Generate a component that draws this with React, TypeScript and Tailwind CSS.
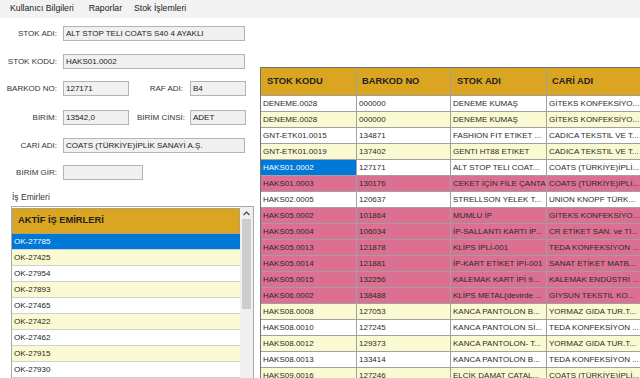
import React from "react";

type Tone = "w" | "y" | "p";

const rows: { kod: string; barkod: string; ad: string; cari: string; tone: Tone; sel?: boolean }[] = [
  { kod: "DENEME.0028", barkod: "000000", ad: "DENEME KUMAŞ", cari: "GİTEKS KONFEKSİYO...", tone: "w" },
  { kod: "DENEME.0028", barkod: "000000", ad: "DENEME KUMAŞ", cari: "GİTEKS KONFEKSİYO...", tone: "y" },
  { kod: "GNT-ETK01.0015", barkod: "134871", ad: "FASHION FIT ETIKET ...", cari: "CADICA TEKSTIL VE T...", tone: "w" },
  { kod: "GNT-ETK01.0019", barkod: "137402", ad: "GENTI HT88 ETIKET", cari: "CADICA TEKSTIL VE T...", tone: "y" },
  { kod: "HAKS01.0002", barkod: "127171", ad: "ALT STOP TELI COAT...", cari: "COATS (TÜRKİYE)İPLİ...", tone: "w", sel: true },
  { kod: "HAKS01.0003", barkod: "130176", ad: "CEKET İÇİN FİLE ÇANTA", cari: "COATS (TÜRKİYE)İPLİ...", tone: "p" },
  { kod: "HAKS02.0005", barkod: "120637", ad: "STRELLSON YELEK T...", cari: "UNION KNOPF TÜRK...", tone: "w" },
  { kod: "HAKS05.0002", barkod: "101864", ad: "MUMLU İP", cari: "GİTEKS KONFEKSİYO...", tone: "p" },
  { kod: "HAKS05.0004", barkod: "106034", ad: "İP-SALLANTI KARTI İP...", cari: "CR ETİKET SAN. ve Tİ...", tone: "p" },
  { kod: "HAKS05.0013", barkod: "121878", ad: "KLİPS İPLİ-001", cari: "TEDA KONFEKSİYON ...", tone: "p" },
  { kod: "HAKS05.0014", barkod: "121881", ad: "İP-KART ETİKET İPİ-001", cari: "SANAT ETİKET MATB...", tone: "p" },
  { kod: "HAKS05.0015", barkod: "132256", ad: "KALEMAK KART İPİ 9...", cari: "KALEMAK ENDÜSTRİ ...", tone: "p" },
  { kod: "HAKS06.0002", barkod: "138488", ad: "KLİPS METAL(devirde ...", cari: "GİYSUN TEKSTİL KO...", tone: "p" },
  { kod: "HAKS08.0008", barkod: "127053", ad: "KANCA PANTOLON B...", cari: "YORMAZ GIDA TUR.T...", tone: "y" },
  { kod: "HAKS08.0010", barkod: "127245", ad: "KANCA PANTOLON Sİ...", cari: "TEDA KONFEKSİYON ...", tone: "w" },
  { kod: "HAKS08.0012", barkod: "129373", ad: "KANCA PANTOLON- T...", cari: "YORMAZ GIDA TUR.T...", tone: "y" },
  { kod: "HAKS08.0013", barkod: "133414", ad: "KANCA PANTOLON B...", cari: "TEDA KONFEKSİYON ...", tone: "w" },
  { kod: "HAKS09.0016", barkod: "127246", ad: "ELCİK DAMAT CATAL...", cari: "COATS (TÜRKİYE)İPLİ...", tone: "y" },
];

const orders = ["OK-27785", "OK-27425", "OK-27954", "OK-27893", "OK-27465", "OK-27422", "OK-27462", "OK-27915", "OK-27930"];

const toneBg: Record<Tone, string> = {
  w: "bg-white",
  y: "bg-[#fafad2]",
  p: "bg-[#db7093]",
};

function Field({ value, w }: { value: string; w: string }) {
  return (
    <div className={`h-[15px] ${w} bg-[#f0f0f0] border border-[#b4b4b4] pl-[2px] text-[8px] leading-[13px] text-[#222] whitespace-nowrap overflow-hidden`}>
      {value}
    </div>
  );
}

function Label({ text, w = "w-[57px]" }: { text: string; w?: string }) {
  return <div className={`${w} text-right text-[8px] text-[#333] leading-[15px] whitespace-nowrap`}>{text}</div>;
}

export default function App() {
  return (
    <div className="w-[640px] h-[378px] overflow-hidden bg-white font-['Liberation_Sans',Arial,sans-serif]">
      {/* Menu */}
      <div className="h-[18px] bg-[#f2f2f2] flex items-center text-[8.7px] text-[#1a1a1a]">
        <span className="ml-[10px]">Kullanıcı Bilgileri</span>
        <span className="ml-[15px]">Raporlar</span>
        <span className="ml-[12px]">Stok İşlemleri</span>
      </div>

      <div className="flex">
        {/* Left side */}
        <div className="w-[260px] shrink-0">
          <div className="flex mt-[8px]">
            <Label text="STOK ADI:" />
            <div className="ml-[6px]"><Field value="ALT STOP TELI COATS S40 4 AYAKLI" w="w-[182px]" /></div>
          </div>
          <div className="flex mt-[13px]">
            <Label text="STOK KODU:" />
            <div className="ml-[6px]"><Field value="HAKS01.0002" w="w-[182px]" /></div>
          </div>
          <div className="flex mt-[12px]">
            <Label text="BARKOD NO:" />
            <div className="ml-[6px]"><Field value="127171" w="w-[66px]" /></div>
            <Label text="RAF ADI:" w="w-[54px]" />
            <div className="ml-[7px]"><Field value="B4" w="w-[56px]" /></div>
          </div>
          <div className="flex mt-[14px]">
            <Label text="BİRİM:" />
            <div className="ml-[6px]"><Field value="13542,0" w="w-[66px]" /></div>
            <Label text="BİRİM CİNSİ:" w="w-[56px]" />
            <div className="ml-[5px]"><Field value="ADET" w="w-[56px]" /></div>
          </div>
          <div className="flex mt-[13px]">
            <Label text="CARİ ADI:" />
            <div className="ml-[6px]"><Field value="COATS (TÜRKİYE)İPLİK SANAYİ A.Ş." w="w-[182px]" /></div>
          </div>
          <div className="flex mt-[12px]">
            <Label text="BİRİM GİR:" />
            <div className="ml-[6px]"><Field value="" w="w-[80px]" /></div>
          </div>

          <div className="mt-[11px] ml-[12px] h-[12px] text-[8.5px] leading-[12px] text-[#333]">İş Emirleri</div>

          {/* Work orders list */}
          <div className="mt-[3px] ml-[11px] w-[243px] h-[200px] border border-[#a9a9a9] flex">
            <div className="w-[228px] pt-[1px]">
              <div className="h-[26px] bg-[#daa520] border border-[#b8a070] flex items-center pl-[5px] text-[9.3px] font-bold text-[#222]">
                AKTİF İŞ EMİRLERİ
              </div>
              {orders.map((o, i) => (
                <div
                  key={o}
                  className={`h-[16px] border-b border-[#d0d0d0] pl-[2px] text-[8px] leading-[15px] ${
                    i === 0 ? "bg-[#0078d7] text-white" : i % 2 === 1 ? "bg-[#fafad2] text-[#222]" : "bg-white text-[#222]"
                  }`}
                >
                  {o}
                </div>
              ))}
            </div>
            <div className="w-[13px] bg-[#f0f0f0] flex flex-col items-center">
              <div className="h-[12px] w-full flex items-center justify-center">
                <svg width="7" height="5" viewBox="0 0 7 5">
                  <path d="M0.5 4 L3.5 1 L6.5 4" fill="none" stroke="#444" strokeWidth="1.2" />
                </svg>
              </div>
              <div className="w-[9px] h-[90px] bg-[#cdcdcd]" />
            </div>
          </div>
        </div>

        {/* Grid */}
        <div className="mt-[49px] border-l border-t border-[#707070] flex-1 overflow-hidden">
          <div className="flex h-[28px] bg-[#daa520] border-b border-[#a0a0a0] text-[9.3px] font-bold text-[#222]">
            <div className="w-[96px] shrink-0 border-r border-[#a0a0a0] pl-[6px] flex items-center">STOK KODU</div>
            <div className="w-[94px] shrink-0 border-r border-[#a0a0a0] pl-[5px] flex items-center">BARKOD NO</div>
            <div className="w-[96px] shrink-0 border-r border-[#a0a0a0] pl-[6px] flex items-center">STOK ADI</div>
            <div className="w-[100px] shrink-0 pl-[5px] flex items-center">CARİ ADI</div>
          </div>
          {rows.map((r, i) => (
            <div key={i} className={`flex h-[16px] border-b border-[#a0a0a0] text-[8px] leading-[15px] text-[#2a2a2a] ${toneBg[r.tone]}`}>
              <div className={`w-[96px] shrink-0 border-r border-[#a0a0a0] pl-[2px] whitespace-nowrap overflow-hidden ${r.sel ? "bg-[#0078d7] text-white" : ""}`}>
                {r.kod}
              </div>
              <div className="w-[94px] shrink-0 border-r border-[#a0a0a0] pl-[2px] whitespace-nowrap overflow-hidden">{r.barkod}</div>
              <div className="w-[96px] shrink-0 border-r border-[#a0a0a0] pl-[2px] whitespace-nowrap overflow-hidden">{r.ad}</div>
              <div className="w-[100px] shrink-0 pl-[2px] whitespace-nowrap overflow-hidden">{r.cari}</div>
            </div>
          ))}
        </div>
      </div>
    </div>
  );
}
